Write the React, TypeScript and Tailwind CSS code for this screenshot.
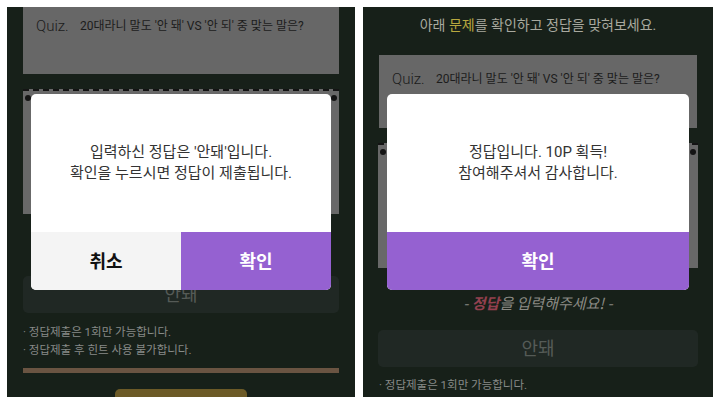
import React from "react";

const font = { fontFamily: 'Roboto, "Noto Sans CJK KR", "Noto Sans", sans-serif' };

function Board({ className }: { className?: string }) {
  return (
    <div className={"relative shrink-0 bg-[#686868] border-t-2 border-dashed border-[#141414] " + (className ?? "")}>
      <div className="absolute left-[2px] top-[4px] w-[6px] h-[6px] rounded-full bg-[#141414]" />
      <div className="absolute right-[2px] top-[4px] w-[6px] h-[6px] rounded-full bg-[#141414]" />
    </div>
  );
}

function QuizLine() {
  return (
    <div className="flex items-center text-[#1c1c1c]">
      <span className="text-[15px] font-light w-[44px]">Quiz.</span>
      <span className="text-[12px]">20대라니 말도 '안 돼' VS '안 되' 중 맞는 말은?</span>
    </div>
  );
}

export default function App() {
  return (
    <div className="w-[720px] h-[404px] bg-white p-[7px] flex gap-[8px]" style={font}>
      {/* Left phone */}
      <div className="relative w-[348px] h-[390px] bg-[#172019] overflow-hidden flex flex-col">
        <div className="shrink-0 mx-[16px] h-[67px] bg-[#676767] pl-[13px] pt-[8px]">
          <QuizLine />
        </div>
        <Board className="mt-[15px] ml-[16px] mr-[16px] h-[125px]" />
        <div className="shrink-0 mt-[62px] mx-[16px] h-[37px] rounded-[5px] bg-[#202824] flex items-center justify-center text-[18px] text-[#555b57]">
          안돼
        </div>
        <div className="shrink-0 mt-[10px] px-[16px] text-[11.5px] leading-[18px] text-[#878a88]">
          <div>· 정답제출은 1회만 가능합니다.</div>
          <div>· 정답제출 후 힌트 사용 불가합니다.</div>
        </div>
        <div className="shrink-0 mt-[9px] mx-[16px] h-[5px] bg-[#6a5442]" />
        <div className="shrink-0 mt-[16px] mx-auto w-[132px] h-[12px] rounded-t-[5px] bg-[#6c5a27]" />

        {/* Modal */}
        <div className="absolute left-[24px] top-[87px] w-[300px] h-[196px] bg-white rounded-[5px] overflow-hidden flex flex-col">
          <div className="flex-1 flex flex-col items-center justify-center text-[15px] leading-[21px] text-[#333]">
            <div>입력하신 정답은 '안돼'입니다.</div>
            <div>확인을 누르시면 정답이 제출됩니다.</div>
          </div>
          <div className="h-[58px] flex">
            <div className="flex-1 bg-[#f4f4f4] flex items-center justify-center text-[18px] font-bold text-[#111]">취소</div>
            <div className="flex-1 bg-[#9561d1] flex items-center justify-center text-[18px] font-bold text-white">확인</div>
          </div>
        </div>
      </div>

      {/* Right phone */}
      <div className="relative w-[350px] h-[390px] bg-[#172019] overflow-hidden flex flex-col">
        <div className="shrink-0 h-[36px] flex items-center justify-center text-[14px] text-[#a8a99f]">
          아래&nbsp;<span className="text-[#b8a83e]">문제</span>를 확인하고 정답을 맞혀보세요.
        </div>
        <div className="shrink-0 mt-[12px] mx-[16px] h-[73px] bg-[#676767] pl-[13px] pt-[13px]">
          <QuizLine />
        </div>
        <Board className="mt-[15px] ml-[15px] mr-[15px] h-[125px]" />
        <div className="shrink-0 mt-[24px] flex items-center justify-center text-[15px] text-[#8a8a84] italic" style={{ fontFamily: '"Noto Sans CJK KR", sans-serif' }}>
          -&nbsp;<span className="text-[#93404f] font-bold">정답</span>을 입력해주세요!&nbsp;-
        </div>
        <div className="shrink-0 mt-[15px] mx-[15px] h-[37px] rounded-[5px] bg-[#202824] flex items-center justify-center text-[18px] text-[#555b57]">
          안돼
        </div>
        <div className="shrink-0 mt-[9px] px-[16px] text-[11.5px] leading-[18px] text-[#878a88]">
          <div>· 정답제출은 1회만 가능합니다.</div>
        </div>

        {/* Modal */}
        <div className="absolute left-[24px] top-[87px] w-[302px] h-[196px] bg-white rounded-[5px] overflow-hidden flex flex-col">
          <div className="flex-1 flex flex-col items-center justify-center text-[15px] leading-[21px] text-[#333]">
            <div>정답입니다. 10P 획득!</div>
            <div>참여해주셔서 감사합니다.</div>
          </div>
          <div className="h-[58px] bg-[#9561d1] flex items-center justify-center text-[18px] font-bold text-white">확인</div>
        </div>
      </div>
    </div>
  );
}
